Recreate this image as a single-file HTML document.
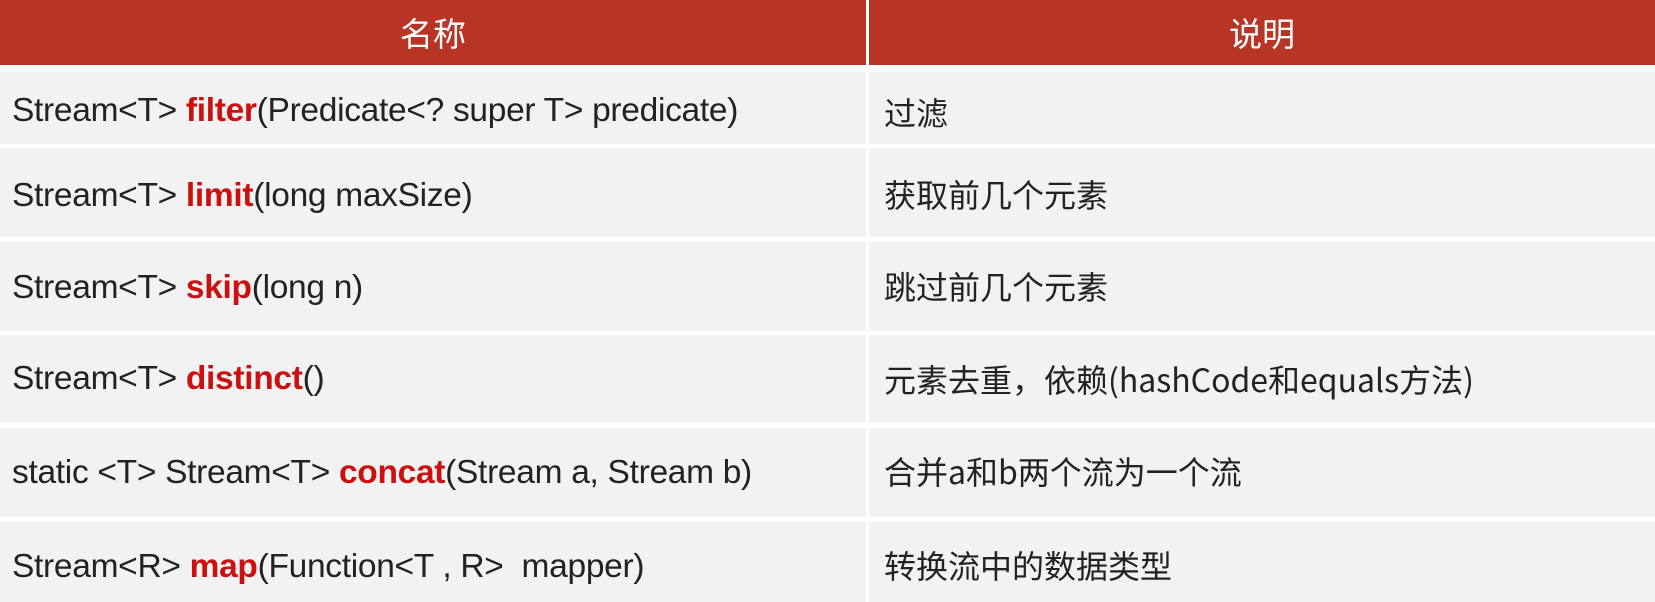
<!DOCTYPE html>
<html><head><meta charset="utf-8"><style>
html,body{margin:0;padding:0;background:#fff;}
body{width:1655px;height:602px;position:relative;overflow:hidden;font-family:"Liberation Sans","Noto Sans CJK SC",sans-serif;color:#222;}
.hd{position:absolute;top:0;height:65px;background:#b83526;color:#fff;font-size:33px;line-height:65px;text-align:center;font-family:"Noto Sans CJK SC",sans-serif;}
.c{position:absolute;background:#f2f2f2;}
.t{position:absolute;font-size:33.5px;white-space:nowrap;transform:translateY(-50%);}
.l{left:12px;letter-spacing:-0.3px;}
.r{left:884px;font-family:"Noto Sans CJK SC","Liberation Sans",sans-serif;font-size:32px;}
b{color:#cc1010;}
</style></head><body>
<div class="hd" style="left:0;width:866px">名称</div>
<div class="hd" style="left:869px;width:786px">说明</div>

<div class="c" style="left:0;width:866px;top:72px;height:72px"></div>
<div class="c" style="left:869px;width:786px;top:72px;height:72px"></div>
<div class="c" style="left:0;width:866px;top:148px;height:89px"></div>
<div class="c" style="left:869px;width:786px;top:148px;height:89px"></div>
<div class="c" style="left:0;width:866px;top:242px;height:89px"></div>
<div class="c" style="left:869px;width:786px;top:242px;height:89px"></div>
<div class="c" style="left:0;width:866px;top:335px;height:88px"></div>
<div class="c" style="left:869px;width:786px;top:335px;height:88px"></div>
<div class="c" style="left:0;width:866px;top:428px;height:89px"></div>
<div class="c" style="left:869px;width:786px;top:428px;height:89px"></div>
<div class="c" style="left:0;width:866px;top:522px;height:80px"></div>
<div class="c" style="left:869px;width:786px;top:522px;height:80px"></div>

<div class="t l" style="top:111px">Stream&lt;T&gt; <b>filter</b>(Predicate&lt;? super T&gt; predicate)</div>
<div class="t l" style="top:196px">Stream&lt;T&gt; <b>limit</b>(long maxSize)</div>
<div class="t l" style="top:288px">Stream&lt;T&gt; <b>skip</b>(long n)</div>
<div class="t l" style="top:379px">Stream&lt;T&gt; <b>distinct</b>()</div>
<div class="t l" style="top:473px">static &lt;T&gt; Stream&lt;T&gt; <b>concat</b>(Stream a, Stream b)</div>
<div class="t l" style="top:567px">Stream&lt;R&gt; <b>map</b>(Function&lt;T , R&gt;&nbsp; mapper)</div>

<div class="t r" style="top:112px">过滤</div>
<div class="t r" style="top:194px">获取前几个元素</div>
<div class="t r" style="top:286px">跳过前几个元素</div>
<div class="t r" style="top:379px">元素去重，依赖(hashCode和equals方法)</div>
<div class="t r" style="top:471px">合并a和b两个流为一个流</div>
<div class="t r" style="top:565px">转换流中的数据类型</div>
</body></html>
